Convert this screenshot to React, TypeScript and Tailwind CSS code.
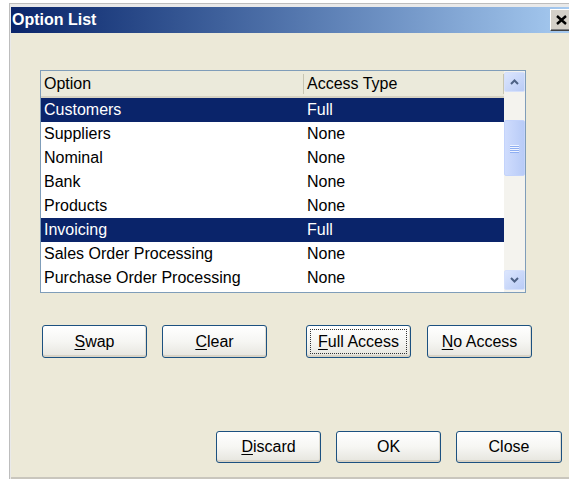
import React from 'react';

type Row = { name: string; access: string; selected?: boolean };

const rows: Row[] = [
  { name: 'Customers', access: 'Full', selected: true },
  { name: 'Suppliers', access: 'None' },
  { name: 'Nominal', access: 'None' },
  { name: 'Bank', access: 'None' },
  { name: 'Products', access: 'None' },
  { name: 'Invoicing', access: 'Full', selected: true },
  { name: 'Sales Order Processing', access: 'None' },
  { name: 'Purchase Order Processing', access: 'None' },
];

const font = { fontFamily: '"Liberation Sans", Arial, sans-serif' };

type ButtonProps = {
  label: string;
  hotkey?: number; // index of the underlined letter
  focused?: boolean;
  width?: string;
  height?: string;
};

const XpButton: React.FC<ButtonProps> = ({
  label,
  hotkey,
  focused,
  width = 'w-[105px]',
  height = 'h-[33px]',
}) => {
  const text =
    hotkey === undefined ? (
      label
    ) : (
      <>
        {label.slice(0, hotkey)}
        <span className="underline underline-offset-2">{label[hotkey]}</span>
        {label.slice(hotkey + 1)}
      </>
    );

  return (
    <button
      className={`${width} ${height} flex p-[3px] rounded-[3px] border border-[#1c5180] bg-gradient-to-b from-white via-[#f6f6f3] to-[#e6e5de] shadow-[inset_0_-2px_0_#d8d3c6,inset_-1px_0_0_#e0ddd2] text-[16px] text-black leading-none`}
    >
      <span
        className={`flex-1 flex items-center justify-center border border-dotted ${
          focused ? 'border-[#333]' : 'border-transparent'
        }`}
      >
        {text}
      </span>
    </button>
  );
};

const Chevron: React.FC<{ up?: boolean }> = ({ up }) => (
  <svg width="9" height="6" viewBox="0 0 9 6">
    <path
      d={up ? 'M1 5 L4.5 1.5 L8 5' : 'M1 1 L4.5 4.5 L8 1'}
      fill="none"
      stroke="#4d6185"
      strokeWidth="2"
    />
  </svg>
);

const ScrollButton: React.FC<{ up?: boolean }> = ({ up }) => (
  <div className="h-[20px] flex items-center justify-center rounded-[2px] border border-[#d5e0fb] bg-gradient-to-br from-[#dce6fd] to-[#b9cbf6]">
    <Chevron up={up} />
  </div>
);

const ScrollBar: React.FC = () => (
  <div className="w-[21px] flex flex-col bg-[#f4f3ee] pt-[1px] pb-[2px]">
    <ScrollButton up />
    <div className="h-[28px]" />
    <div className="h-[56px] flex flex-col items-center justify-center gap-[1px] rounded-[2px] border border-[#c3d3fb] bg-gradient-to-r from-[#cfdcfd] to-[#b8cbf7]">
      {[0, 1, 2, 3].map((i) => (
        <div key={i} className="w-[9px] h-[1px] bg-[#eef3ff] shadow-[0_1px_0_#8eaef2]" />
      ))}
    </div>
    <div className="flex-1" />
    <ScrollButton />
  </div>
);

const OptionList: React.FC = () => (
  <div className="w-[486px] h-[223px] flex border border-[#7f9db9] bg-white">
    <div className="flex-1 flex flex-col">
      {/* column headers */}
      <div className="h-[27px] flex items-center bg-[#ebeadb] border-b-2 border-[#d6d2c2] text-[16px] text-black">
        <div className="w-[262px] pl-[3px]">Option</div>
        <div className="w-[1px] h-[20px] bg-[#c7c5b2]" />
        <div className="flex-1 pl-[3px]">Access Type</div>
        <div className="w-[1px] h-[20px] bg-[#c7c5b2]" />
      </div>
      {rows.map((row) => (
        <div
          key={row.name}
          className={`h-[24px] flex items-center text-[16px] ${
            row.selected ? 'bg-[#0a246a] text-white' : 'text-black'
          }`}
        >
          <div className="w-[263px] pl-[3px] whitespace-nowrap">{row.name}</div>
          <div className="flex-1 pl-[3px]">{row.access}</div>
        </div>
      ))}
    </div>
    <ScrollBar />
  </div>
);

export default function App() {
  return (
    <div className="w-[569px] h-[480px] overflow-hidden bg-white pt-[3px] pl-[9px]" style={font}>
      <div className="h-[476px] flex flex-col border-l border-t border-[#bdbdbd] pl-[1px] pt-[3px] bg-[#e9e9e9]">
        {/* title bar */}
        <div className="h-[26px] shrink-0 flex items-center bg-gradient-to-r from-[#0a246a] to-[#a6caf0]">
          <span className="pl-[1px] text-[16px] font-bold text-white">Option List</span>
          <div className="ml-auto -mr-[3px] w-[22px] h-[22px] flex items-center justify-center bg-[#d4d0c8] border-t border-l border-white border-r border-b border-r-[#404040] border-b-[#404040] shadow-[inset_-1px_-1px_0_#808080]">
            <svg width="11" height="10" viewBox="0 0 11 10">
              <path d="M1 1 L10 9 M10 1 L1 9" stroke="#000" strokeWidth="2.4" />
            </svg>
          </div>
        </div>

        {/* dialog body */}
        <div className="flex-1 flex flex-col bg-[#ece9d8] border-b-2 border-[#c9c6bd] pl-[29px] pt-[37px]">
          <OptionList />

          <div className="mt-[32px] flex ml-[2px]">
            <XpButton label="Swap" hotkey={0} />
            <div className="ml-[15px]">
              <XpButton label="Clear" hotkey={0} />
            </div>
            <div className="ml-[39px]">
              <XpButton label="Full Access" hotkey={0} focused />
            </div>
            <div className="ml-[16px]">
              <XpButton label="No Access" hotkey={0} />
            </div>
          </div>

          <div className="mt-[73px] flex gap-[15px] ml-[176px]">
            <XpButton label="Discard" hotkey={0} height="h-[32px]" />
            <XpButton label="OK" height="h-[32px]" />
            <XpButton label="Close" width="w-[106px]" height="h-[32px]" />
          </div>
        </div>
      </div>
    </div>
  );
}
